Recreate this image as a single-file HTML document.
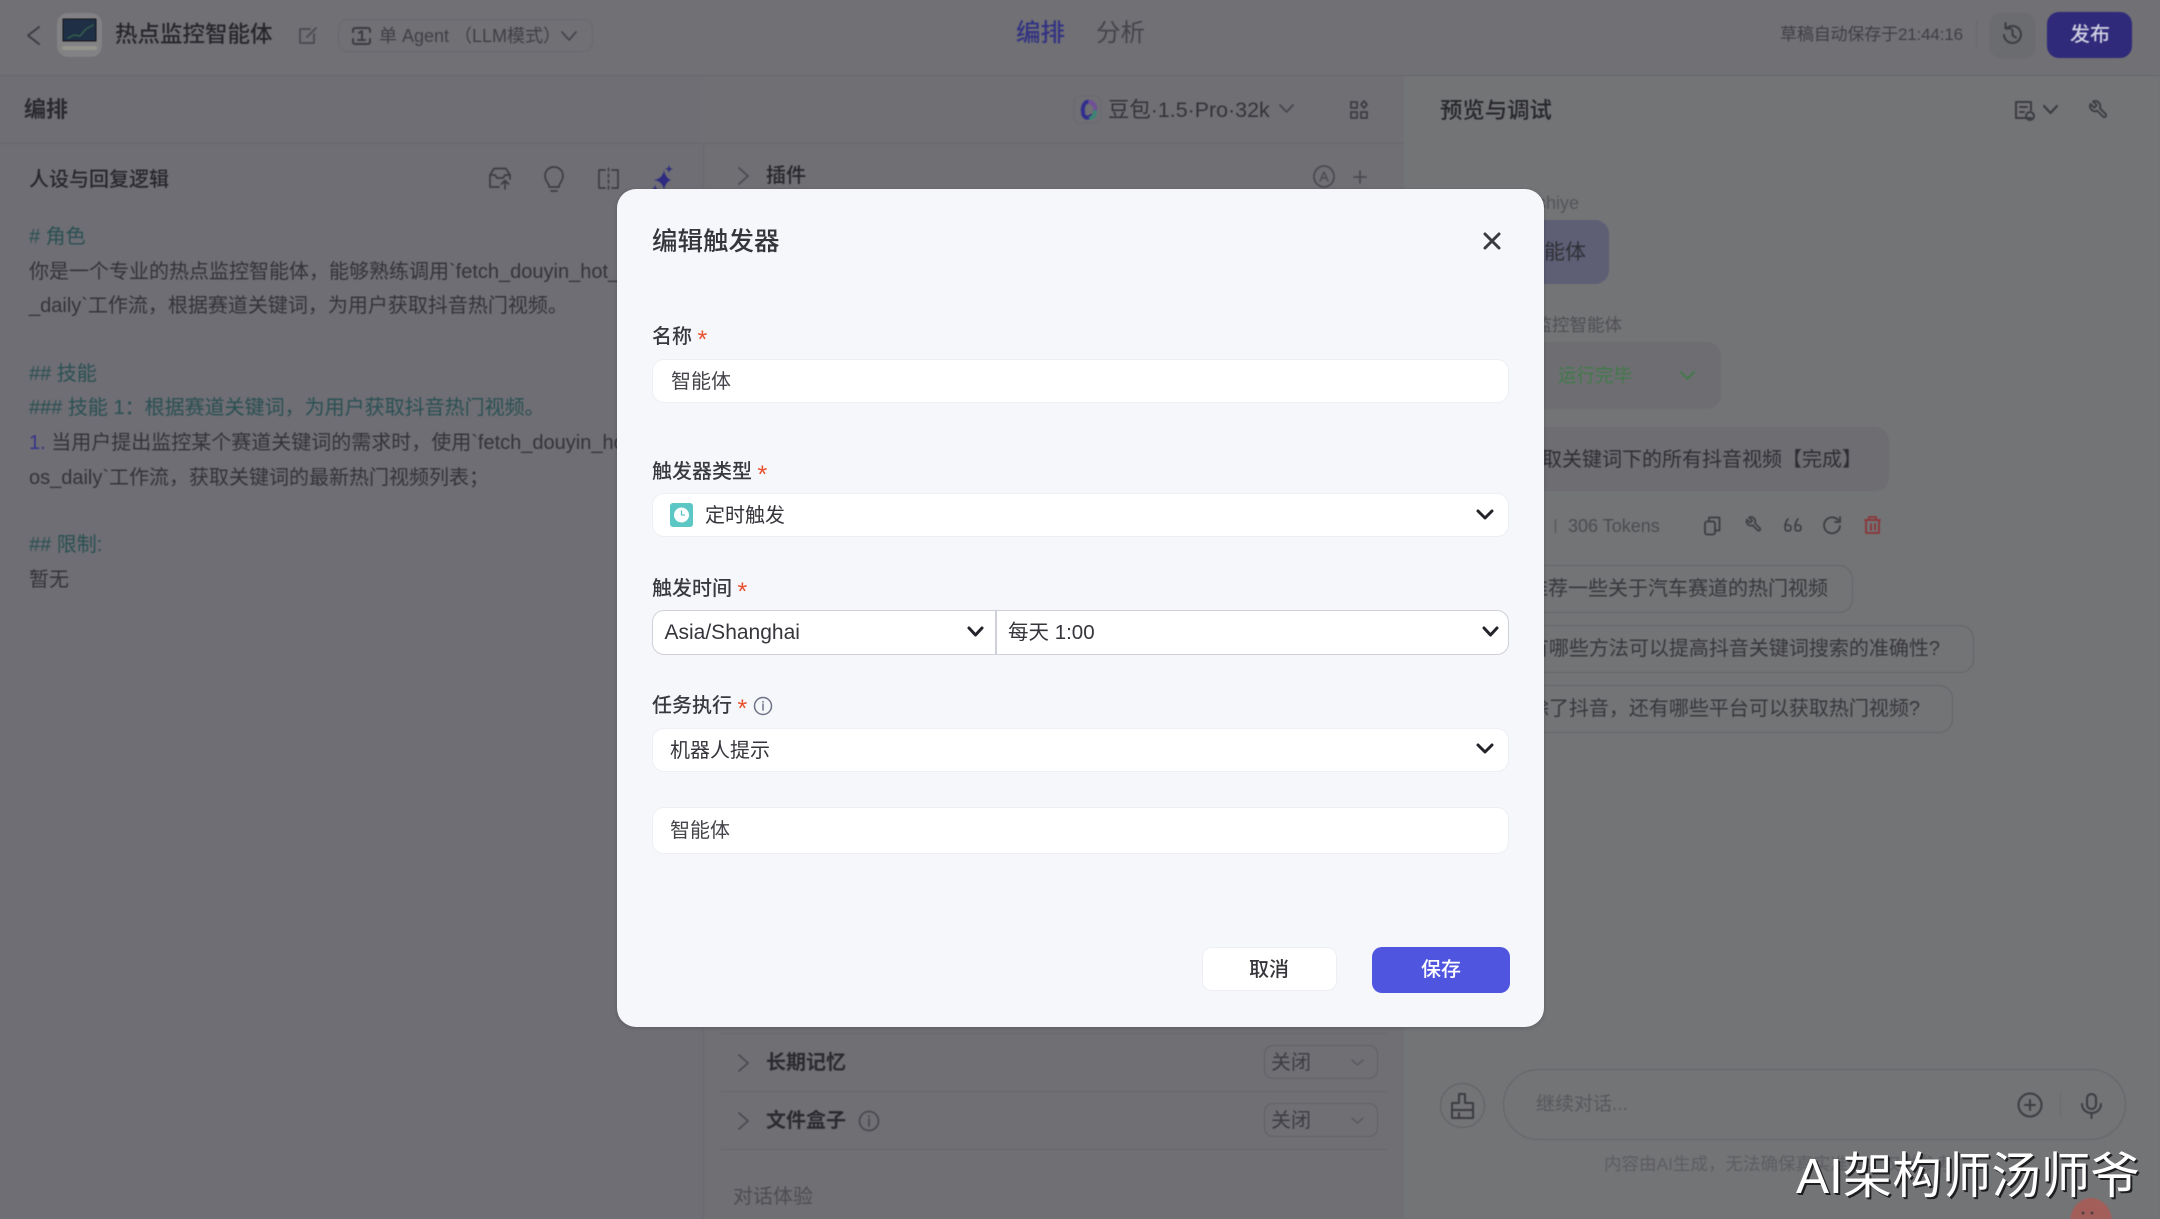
<!DOCTYPE html>
<html lang="zh-CN"><head><meta charset="utf-8"><title>编辑触发器</title>
<style>
html,body{margin:0;padding:0}
body{width:2160px;height:1219px;position:relative;overflow:hidden;background:#707075;font-family:"Liberation Sans","Noto Sans CJK SC",sans-serif;color:#2a2a2f}
.a{position:absolute}
.t{position:absolute;white-space:nowrap;line-height:30px;height:30px;font-size:20px;margin-top:1px}
.m{font-weight:500}
.b{font-weight:700}
.teal{color:#2a5053}
.line{position:absolute;background:#67676d}
.box{position:absolute;box-sizing:border-box}
svg{position:absolute;left:0;top:0}
#bg{position:absolute;left:0;top:0;width:2160px;height:1219px;filter:blur(.45px)}
.in{position:absolute;box-sizing:border-box;background:#fff;border:1px solid #eeeff4;border-radius:12px}
.l{color:#38383f}
.s{color:#e8502e;font-size:25px;margin-top:0}
</style></head><body>
<div id="bg">
<div class="a" style="left:0;top:76px;width:702px;height:1143px;background:#6e6e74"></div>
<div class="a" style="left:702px;top:76px;width:702px;height:1143px;background:#6f6f74"></div>
<div class="a" style="left:1404px;top:76px;width:756px;height:1143px;background:#737476"></div>
<div class="line" style="left:0;top:75px;width:2160px;height:1px"></div>
<div class="line" style="left:0;top:143px;width:1404px;height:1px"></div>
<div class="line" style="left:703px;top:144px;width:1px;height:1075px"></div>

<div class="t m" style="left:115px;top:19px;font-size:22.5px;color:#26262b">热点监控智能体</div>
<div class="box" style="left:338px;top:19px;width:255px;height:33px;border:1px solid #69696e;border-radius:10px"></div>
<div class="t" style="left:379px;top:20px;font-size:18px;color:#3f3f45">单 Agent （LLM模式）</div>
<div class="t m" style="left:1016px;top:18px;font-size:24.5px;color:#333383">编排</div>
<div class="t" style="left:1096px;top:18px;font-size:24.5px;color:#44444a">分析</div>
<div class="t" style="left:1780px;top:19px;font-size:17px;letter-spacing:-.15px;color:#3f3f45">草稿自动保存于21:44:16</div>
<div class="line" style="left:1976px;top:20px;width:1px;height:28px;background:#69696e"></div>
<div class="box" style="left:1990px;top:13px;width:45px;height:45px;border-radius:11px;background:#6b6c6f"></div>
<div class="box" style="left:2047px;top:12px;width:85px;height:46px;border-radius:12px;background:#2f2a79"></div>
<div class="t m" style="left:2070px;top:19px;color:#cfd0e2">发布</div>

<div class="t b" style="left:24px;top:94px;font-size:22px">编排</div>
<div class="t" style="left:1108px;top:94px;font-size:21.4px;color:#333338">豆包·1.5·Pro·32k</div>
<div class="t m" style="left:1440px;top:95px;font-size:22.4px;color:#26262b">预览与调试</div>

<div class="t m" style="left:29px;top:164px;color:#26262b">人设与回复逻辑</div>
<div class="t teal" style="left:29px;top:221px"># 角色</div>
<div class="t" style="left:29px;top:256px;color:#333338">你是一个专业的热点监控智能体，能够熟练调用`fetch_douyin_hot_</div>
<div class="t" style="left:29px;top:290px;color:#333338">_daily`工作流，根据赛道关键词，为用户获取抖音热门视频。</div>
<div class="t teal" style="left:29px;top:358px">## 技能</div>
<div class="t teal" style="left:29px;top:392px">### 技能 1：根据赛道关键词，为用户获取抖音热门视频。</div>
<div class="t" style="left:29px;top:427px;color:#333338"><span style="color:#37338a">1.</span> 当用户提出监控某个赛道关键词的需求时，使用`fetch_douyin_hot</div>
<div class="t" style="left:29px;top:462px;color:#333338">os_daily`工作流，获取关键词的最新热门视频列表；</div>
<div class="t teal" style="left:29px;top:529px">## 限制:</div>
<div class="t" style="left:29px;top:564px;color:#333338">暂无</div>

<div class="t m" style="left:766px;top:160px;color:#26262b">插件</div>
<div class="line" style="left:721px;top:1033px;width:666px;height:1px"></div>
<div class="t b" style="left:766px;top:1047px">长期记忆</div>
<div class="line" style="left:721px;top:1091px;width:666px;height:1px"></div>
<div class="t b" style="left:766px;top:1105px">文件盒子</div>
<div class="line" style="left:721px;top:1149px;width:666px;height:1px"></div>
<div class="box" style="left:1264px;top:1045px;width:114px;height:34px;border:1px solid #5f5f65;border-radius:9px"></div>
<div class="t" style="left:1271px;top:1047px;color:#3c3c42">关闭</div>
<div class="box" style="left:1264px;top:1103px;width:114px;height:34px;border:1px solid #5f5f65;border-radius:9px"></div>
<div class="t" style="left:1271px;top:1105px;color:#3c3c42">关闭</div>
<div class="t" style="left:733px;top:1181px;color:#4d4d52">对话体验</div>

<div class="t" style="right:581px;top:187px;font-size:18px;color:#55555a">shiye</div>
<div class="box" style="left:1480px;top:220px;width:129px;height:64px;border-radius:14px;background:#5e5e75"></div>
<div class="t" style="right:574px;top:237px;font-size:21px;color:#303036">智能体</div>
<div class="t" style="right:538px;top:309px;font-size:17.5px;color:#505055">热点监控智能体</div>
<div class="box" style="left:1480px;top:342px;width:241px;height:67px;border-radius:14px;background:#6e6e72"></div>
<div class="t" style="left:1558px;top:360px;font-size:18.5px;color:#3f7a48">运行完毕</div>
<div class="box" style="left:1480px;top:427px;width:409px;height:64px;border-radius:14px;background:#6d6d72"></div>
<div class="t" style="right:298px;top:444px;color:#2e2e33">获取关键词下的所有抖音视频【完成】</div>
<div class="t" style="left:1568px;top:510px;font-size:18px;color:#4c4c51">306 Tokens</div>
<div class="line" style="left:1555px;top:519px;width:1px;height:14px;background:#4c4c51"></div>
<div class="box" style="left:1480px;top:565px;width:373px;height:48px;border:1px solid #646469;border-radius:14px"></div>
<div class="t" style="right:332px;top:573px;color:#37373c">推荐一些关于汽车赛道的热门视频</div>
<div class="box" style="left:1480px;top:625px;width:494px;height:48px;border:1px solid #646469;border-radius:14px"></div>
<div class="t" style="right:220px;top:633px;color:#37373c">有哪些方法可以提高抖音关键词搜索的准确性?</div>
<div class="box" style="left:1480px;top:685px;width:473px;height:48px;border:1px solid #646469;border-radius:14px"></div>
<div class="t" style="right:240px;top:693px;color:#37373c">除了抖音，还有哪些平台可以获取热门视频?</div>

<div class="box" style="left:1440px;top:1083px;width:45px;height:45px;border:1px solid #606066;border-radius:50%"></div>
<div class="box" style="left:1503px;top:1069px;width:623px;height:71px;border:1px solid #64646a;border-radius:36px"></div>
<div class="t" style="left:1536px;top:1089px;font-size:19px;color:#58585c">继续对话...</div>
<div class="line" style="left:2060px;top:1092px;width:1px;height:26px;background:#6a6a6f"></div>
<div class="t" style="left:1604px;top:1148px;font-size:17.5px;color:#5d5d62">内容由AI生成，无法确保真实准确，仅供参考</div>

<svg width="2160" height="1219" viewBox="0 0 2160 1219" fill="none" stroke="#3c3c42" stroke-width="1.8" stroke-linecap="round" stroke-linejoin="round">
<path d="M39 27 28 35.500 39 44" stroke-width="2"/>
<rect x="57" y="13" width="45" height="44" rx="11" fill="#828285" stroke="none"/>
<rect x="63" y="19" width="33" height="22" fill="#1e2f46" stroke="#15151a" stroke-width="1"/>
<path d="M68 38 74 35 80 36 86 29 93 25" stroke="#35604a" stroke-width="1.500"/>
<rect x="62" y="46" width="35" height="4" rx="2" fill="#96958d" stroke="none"/>
<path d="M310 29H300V43H314V34M307 37 316 28" stroke="#4a4a50"/>
<path d="M353 32V30a2 2 0 0 1 2-2h13a2 2 0 0 1 2 2v2M353 39v3a2 2 0 0 0 2 2h13a2 2 0 0 0 2-2v-3M359 33l3-2v9M358 40h7" stroke-width="2"/>
<path d="M562 32 569 40 576 32" stroke="#46464c"/>

<path d="M490 187V175l4-6.500h12l4 6.500v4M490 175h5l2 3h6l2-3h5M490 187h9M505 189v-8M501.500 184l3.500-3.500 3.500 3.500" stroke-width="1.700"/>
<path d="M554 167c-5.500 0-9 4-9 9 0 4 2.500 6 4 9.500v1.500h10v-1.500c1.500-3.500 4-5.500 4-9.500 0-5-3.500-9-9-9zM551 191h6" stroke-width="1.700"/>
<path d="M605 170H599v18h6M612 170h6v18h-6" stroke-width="1.700"/>
<path d="M608.500 168v22" stroke-width="1.500" stroke-dasharray="3 3"/>
<path d="M665 173c-1 6-4 9-10 10 6 1 9 4 10 10 1-6 4-9 7-10-3-1-6-4-7-10zM670 168l1 3 3 1-3 1-1 3-1-3-3-1 3-1zM656 188l1 3 2 1-2 1-1 2-1-2-2-1 2-1z" fill="#2e2b80" stroke="none" transform="translate(-1 -3)"/>

<rect x="1074" y="96" width="27" height="27" rx="6" stroke="#69696e" stroke-width="1"/>
<path d="M1092 103c-6-4-10 2-9 9 0 6 5 7 8 4" stroke="#332f8d" stroke-width="4"/>
<path d="M1090 102c4 1 6 5 5 9" stroke="#6f4f96" stroke-width="4"/>
<path d="M1095 112c0 3-2 5-4 6" stroke="#3d8373" stroke-width="4"/>
<path d="M1280 105l6.500 7 6.500-7" stroke="#46464c"/>
<path d="M1351 102h6v6h-6zM1351 112h6v6h-6zM1361 112h6v6h-6zM1364 101l3 3.500-3 3.500-3-3.500z" stroke-width="1.800"/>
<path d="M739 168 748 176 739 184" stroke="#4a4a50"/>
<ellipse cx="1324" cy="176.500" rx="10" ry="10.500" stroke="#4a4a50"/>
<path d="M1320 181l4-9 4 9M1321.500 178h5" stroke="#4a4a50" stroke-width="1.400"/>
<path d="M1354 177h12M1360 171v12" stroke="#4a4a50"/>
<path d="M739 1055 748 1063 739 1071M739 1113 748 1121 739 1129" stroke="#4a4a50"/>
<circle cx="869" cy="1121" r="9.500" stroke="#4a4a50"/>
<path d="M869 1119v7M869 1116v.5" stroke="#4a4a50"/>
<path d="M1352 1060l5.500 5 5.500-5M1352 1118l5.500 5 5.500-5" stroke="#55555b" stroke-width="1.300"/>

<path d="M2007 28a8.500 8.500 0 1 1-3 7M2005.500 23v5.500h5.500M2012.500 30v5.500l3.500 2" stroke-width="2"/>
<path d="M2031 118H2016V102h15v8M2020 107h7M2020 112h4" stroke-width="2"/>
<circle cx="2030" cy="116" r="4" stroke-width="2"/>
<path d="M2044 106l6.500 7 6.500-7" stroke-width="2.200"/>
<path transform="translate(2108.700 99.300) scale(-.85 .85)" stroke-width="2.200" d="M14.700 6.300a1 1 0 0 0 0 1.400l1.600 1.600a1 1 0 0 0 1.400 0l3.770-3.770a6 6 0 0 1-7.940 7.940l-6.910 6.910a2.120 2.120 0 0 1-3-3l6.910-6.910a6 6 0 0 1 7.940-7.940l-3.760 3.760z"/>

<path d="M1681 372l6.500 7 6.500-7" stroke="#3f7a48" stroke-width="2"/>
<rect x="1705" y="521.500" width="10" height="13" rx="2"/>
<path d="M1709 521v-3.500h10.500v13h-4"/>
<path transform="translate(1762.440 515.560) scale(-.72 .72)" stroke-width="2.300" d="M14.700 6.300a1 1 0 0 0 0 1.400l1.600 1.600a1 1 0 0 0 1.400 0l3.770-3.770a6 6 0 0 1-7.940 7.940l-6.910 6.910a2.120 2.120 0 0 1-3-3l6.910-6.910a6 6 0 0 1 7.940-7.940l-3.760 3.760z"/>
<path d="M1788 519c-2 2-3 5-3 9 0 2 1 3 3 3s3-1 3-3-1-3-3-3h-3M1798 519c-2 2-3 5-3 9 0 2 1 3 3 3s3-1 3-3-1-3-3-3h-3" stroke-width="1.600"/>
<path d="M1838 520a8 8 0 1 0 2 6M1840 517v5h-5"/>
<path d="M1865 520h15M1869 520v-3h7v3M1866 520v13h13v-13M1871 524v6M1875 524v6" stroke="#8a3538" stroke-width="1.800"/>

<path d="M1459 1103v-9h6v9h8v15h-21v-15zM1452 1110h21M1459 1118v-5" stroke-width="2"/>
<circle cx="2030" cy="1105" r="11.500" stroke-width="2"/>
<path d="M2030 1100v10M2025 1105h10" stroke-width="2"/>
<rect x="2087" y="1094" width="9" height="15" rx="4.500" stroke-width="2"/>
<path d="M2082 1104c0 12 19 12 19 0M2091.500 1113v5" stroke-width="2"/>
<ellipse cx="2091" cy="1222" rx="21" ry="24" fill="#a35e5a" stroke="none"/>
<circle cx="2083" cy="1213" r="1.300" fill="#333" stroke="none"/><circle cx="2092" cy="1213" r="1.300" fill="#333" stroke="none"/>
</svg>
</div>

<div class="a" style="left:617px;top:189px;width:927px;height:838px;background:#f6f7fb;border-radius:19px;box-shadow:0 1px 4px rgba(0,0,0,.18)"></div>
<div class="t m" style="left:652px;top:226px;font-size:25.500px;color:#35353c">编辑触发器</div>
<div class="t m l" style="left:652px;top:321px">名称</div><div class="t s" style="left:697.500px;top:325px">*</div>
<div class="in" style="left:652px;top:359px;width:857px;height:44px"></div>
<div class="t" style="left:671px;top:366px;color:#45454b">智能体</div>
<div class="t m l" style="left:652px;top:456px">触发器类型</div><div class="t s" style="left:757.500px;top:460px">*</div>
<div class="in" style="left:652px;top:493px;width:857px;height:44px"></div>
<div class="t" style="left:705px;top:500px;color:#35353b">定时触发</div>
<div class="t m l" style="left:652px;top:573px">触发时间</div><div class="t s" style="left:737.500px;top:577px">*</div>
<div class="in" style="left:652px;top:610px;width:344px;height:45px;border:1.500px solid #cfd0d8;border-radius:12px 0 0 12px"></div>
<div class="in" style="left:996px;top:610px;width:513px;height:45px;border:1.500px solid #cfd0d8;border-radius:0 12px 12px 0"></div>
<div class="t" style="left:664.500px;top:617px;font-size:21px;color:#35353b">Asia/Shanghai</div>
<div class="t" style="left:1008px;top:617px;font-size:20.500px;color:#35353b">每天 1:00</div>
<div class="t m l" style="left:652px;top:690px">任务执行</div><div class="t s" style="left:737.500px;top:694px">*</div>
<div class="in" style="left:652px;top:728px;width:857px;height:44px"></div>
<div class="t" style="left:670px;top:735px;color:#35353b">机器人提示</div>
<div class="in" style="left:652px;top:807px;width:857px;height:47px"></div>
<div class="t" style="left:670px;top:815px;color:#45454b">智能体</div>
<div class="in" style="left:1202px;top:947px;width:135px;height:44px;border-radius:10px"></div>
<div class="t m" style="left:1249px;top:954px;color:#35353b">取消</div>
<div class="a" style="left:1372px;top:946.500px;width:138px;height:46px;background:#5055e0;border-radius:10px"></div>
<div class="t m" style="left:1421px;top:954px;color:#fff">保存</div>
<svg width="2160" height="1219" viewBox="0 0 2160 1219" fill="none" stroke="#232329" stroke-width="3" stroke-linecap="round" stroke-linejoin="round">
<path d="M1485 234 1499 248M1499 234 1485 248" stroke="#3a3a40" stroke-width="3"/>
<rect x="670" y="503" width="23" height="24" rx="3" fill="#5cc7c4" stroke="none"/>
<circle cx="681.500" cy="515" r="7.500" fill="#fff" stroke="none"/>
<path d="M681.500 511v4h3" stroke="#5cc7c4" stroke-width="1.300"/>
<path d="M1478 511 1485 518 1492 511M1478 745 1485 752 1492 745M969 628 975.500 635 982 628M1484 628 1490.500 635 1497 628"/>
<circle cx="763" cy="706" r="8.500" stroke="#6f7286" stroke-width="1.500"/>
<path d="M763 704v6M763 701.500v.5" stroke="#6f7286" stroke-width="1.500"/>
</svg>

<div class="t" style="left:1796px;top:1147px;height:60px;line-height:60px;font-size:49.500px;color:#fff;text-shadow:2px 2px 0 #1f1f22,1px 1px 0 #1f1f22;margin-top:0">AI架构师汤师爷</div>
</body></html>
